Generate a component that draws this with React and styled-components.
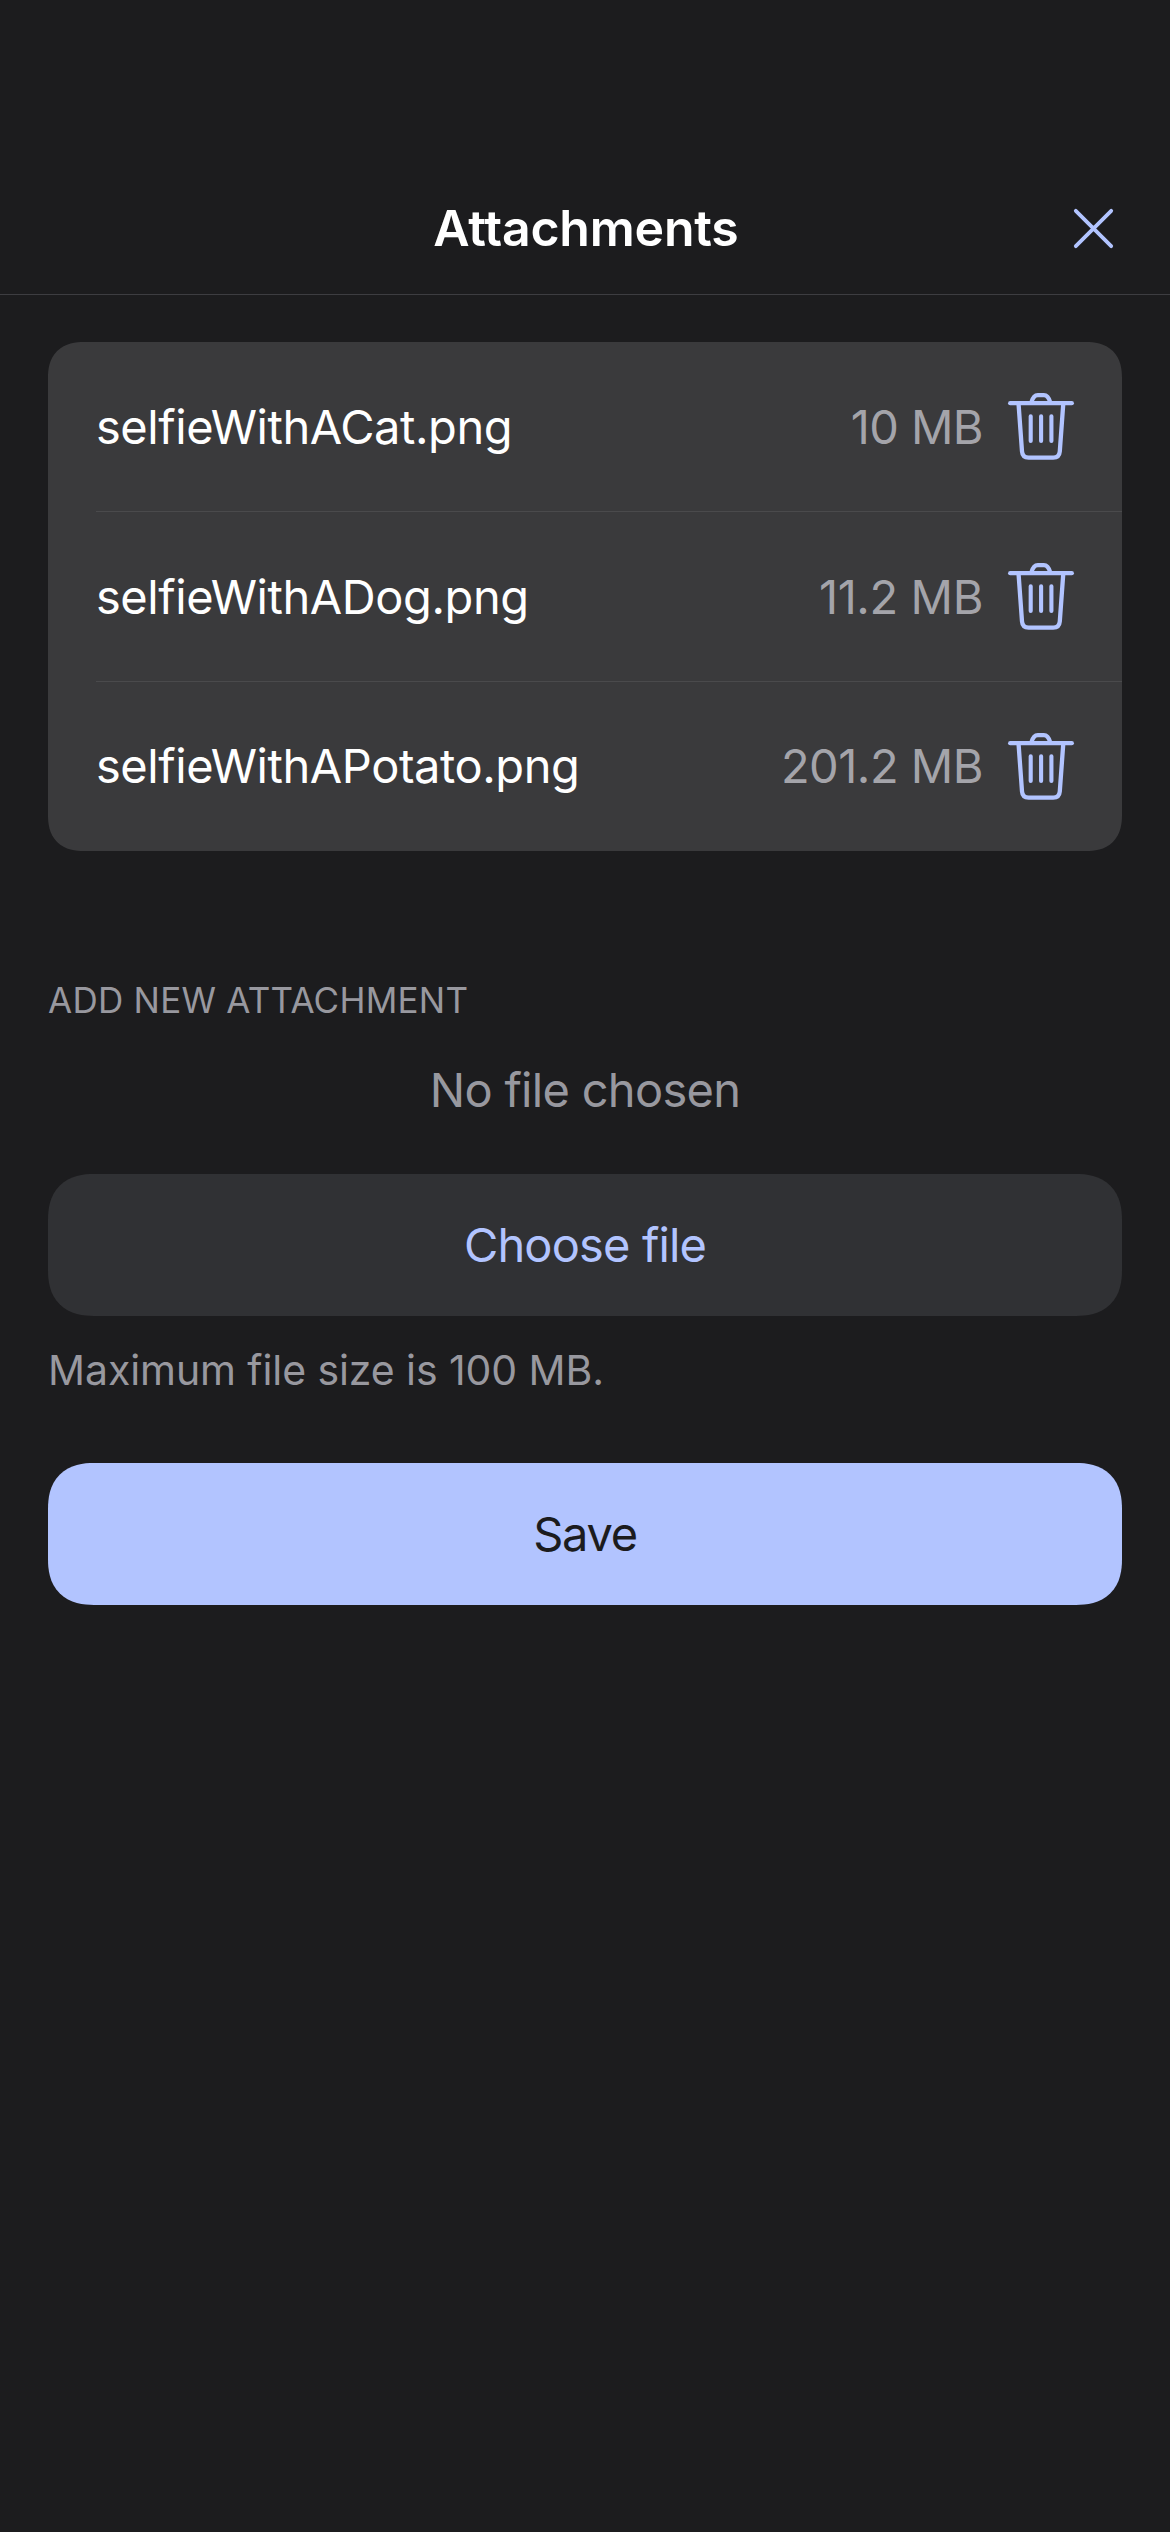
import React from "react";
import styled, { createGlobalStyle } from "styled-components";

const GlobalStyle = createGlobalStyle`
  *, *::before, *::after { box-sizing: border-box; }
  body {
    margin: 0;
    background: #1c1c1e;
    color: #fff;
    font-family: Inter, "Liberation Sans", sans-serif;
  }
  button {
    font: inherit;
    border: 0;
    padding: 0;
    background: none;
  }
`;

const Screen = styled.div`
  display: flex;
  flex-direction: column;
  width: 1170px;
  min-height: 2532px;
  background: #1c1c1e;
`;

const Header = styled.header`
  display: grid;
  grid-template-columns: 1fr auto 1fr;
  align-items: center;
  height: 295px;
  padding: 163px 56px 0;
  border-bottom: 1px solid #3d3d41;
`;

const Title = styled.h1`
  grid-column: 2;
  margin: 0 0 0 2px;
  padding-bottom: 1px;
  font-size: 50px;
  font-weight: 600;
  line-height: 60px;
  letter-spacing: -0.2px;
`;

const CloseButton = styled.button`
  justify-self: end;
  display: flex;
  color: #b2c4ff;
`;

const Content = styled.main`
  display: flex;
  flex-direction: column;
  padding: 47px 48px 0;
`;

const FileList = styled.ul`
  list-style: none;
  margin: 0;
  padding: 0 0 0 48px;
  background: #3a3a3c;
  border-radius: 36px;
  corner-shape: superellipse(1.25);
`;

const FileName = styled.span`
  flex: 1;
  letter-spacing: -0.44px;
`;

const FileSize = styled.span`
  margin-right: 24px;
  color: #a4a4aa;
  letter-spacing: ${(p) => p.$tracking}px;
`;

const FileRow = styled.li`
  display: flex;
  align-items: center;
  height: 170px;
  padding-right: 47px;
  border-bottom: 1px solid #4a4a4c;
  font-size: 47px;
  line-height: 57px;

  &:last-child {
    height: 169px;
    border-bottom: 0;
  }

  &:last-child > span {
    padding-bottom: 2px;
  }
`;

const DeleteButton = styled.button`
  display: flex;
  color: #b2c4ff;
`;

const SectionLabel = styled.h2`
  margin: 128px 0 0;
  color: #98989f;
  font-size: 35px;
  font-weight: 400;
  line-height: 42px;
  letter-spacing: 0.25px;
`;

const FileStatus = styled.p`
  margin: 40px 0 0;
  color: #98989f;
  font-size: 47px;
  line-height: 57px;
  letter-spacing: -0.7px;
  text-align: center;
`;

const ActionButton = styled.button`
  display: flex;
  align-items: center;
  justify-content: center;
  height: 142px;
  margin-top: ${(p) => p.$gap}px;
  padding-bottom: 1px;
  border-radius: 46px;
  corner-shape: superellipse(1.25);
  background: ${(p) => (p.$primary ? "#b2c4ff" : "#303134")};
  color: ${(p) => (p.$primary ? "#1c1c1e" : "#b2c4ff")};
  font-size: 47px;
  line-height: 57px;
  letter-spacing: ${(p) => (p.$primary ? -1.3 : -0.85)}px;
`;

const Hint = styled.p`
  margin: 29px 0 0;
  color: #98989f;
  font-size: 41px;
  line-height: 50px;
  letter-spacing: -0.08px;
`;

const CloseIcon = () => (
  <svg width="41" height="41" viewBox="0 0 41 41" fill="none" stroke="currentColor" strokeWidth="3.8" strokeLinecap="round">
    <path d="M2.8 2.8 38.2 38.2M38.2 2.8 2.8 38.2" />
  </svg>
);

const TrashIcon = () => (
  <svg width="68" height="67" viewBox="0 0 68 67" fill="none" stroke="currentColor" strokeWidth="4.3" strokeLinecap="round" strokeLinejoin="round">
    <path d="M3.2 10.2H64.8" />
    <path d="M24.3 9.6C25.6 5 27.2 2.2 30.8 2.2H36.8C40.4 2.2 42 5 43.3 9.6" />
    <path d="M11.6 11.5 15 58.4C15.3 62.4 17.6 64.6 21.6 64.6H46.2C50.2 64.6 52.5 62.4 52.8 58.4L56.2 11.5" />
    <path strokeWidth="4.1" d="M23.7 23.2V48M34.1 23.2V48M44.4 23.2V48" />
  </svg>
);

const files = [
  { name: "selfieWithACat.png", size: "10 MB", tracking: -0.6 },
  { name: "selfieWithADog.png", size: "11.2 MB", tracking: -0.4 },
  { name: "selfieWithAPotato.png", size: "201.2 MB", tracking: -0.5 },
];

export default function App() {
  return (
    <>
      <GlobalStyle />
      <Screen>
        <Header>
          <Title>Attachments</Title>
          <CloseButton aria-label="Close">
            <CloseIcon />
          </CloseButton>
        </Header>
        <Content>
          <FileList>
            {files.map((file) => (
              <FileRow key={file.name}>
                <FileName>{file.name}</FileName>
                <FileSize $tracking={file.tracking}>{file.size}</FileSize>
                <DeleteButton aria-label={`Delete ${file.name}`}>
                  <TrashIcon />
                </DeleteButton>
              </FileRow>
            ))}
          </FileList>
          <SectionLabel>ADD NEW ATTACHMENT</SectionLabel>
          <FileStatus>No file chosen</FileStatus>
          <ActionButton $gap={56}>Choose file</ActionButton>
          <Hint>Maximum file size is 100 MB.</Hint>
          <ActionButton $gap={68} $primary>
            Save
          </ActionButton>
        </Content>
      </Screen>
    </>
  );
}
